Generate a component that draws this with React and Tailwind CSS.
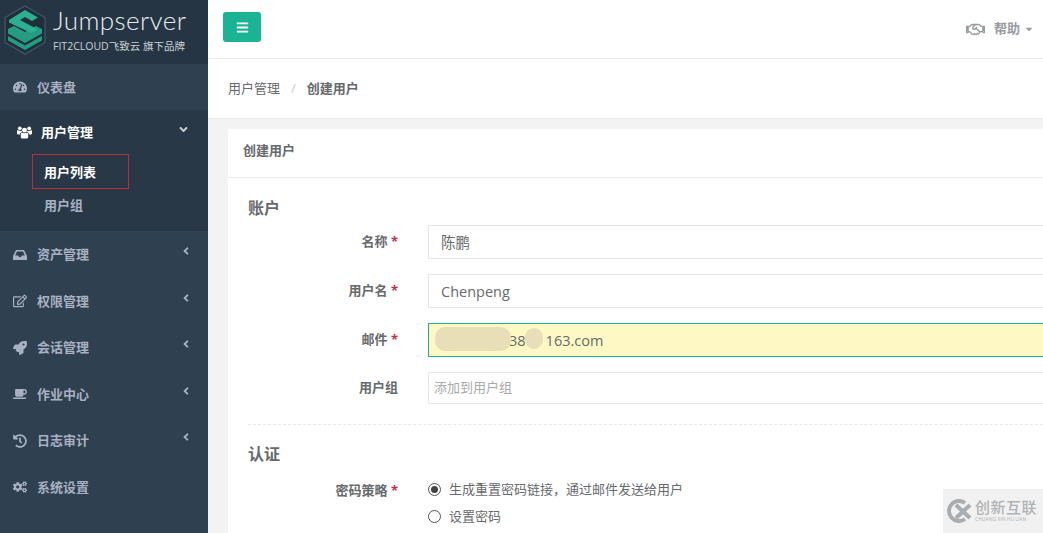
import { FaBars, FaAngleDown, FaAngleLeft, FaTachometerAlt, FaRegEdit, FaRocket, FaCoffee, FaHistory, FaCogs, FaRegHandshake, FaCaretDown } from 'react-icons/fa';

const cjk = 'font-["Open_Sans","Noto_Sans_CJK_SC",sans-serif]';

const Logo = () => (
  <svg width="42" height="50" viewBox="0 0 42 50" className="shrink-0">
    <path d="M21 1 L41 12.5 V37.5 L21 49 L1 37.5 V12.5 Z" fill="#1f2e3a" stroke="#43586a" strokeWidth="1.2" />
    <path d="M4 31 L21 40.5 L38 31 V35.5 L21 45 L4 35.5 Z" fill="#239c82" />
    <path d="M4 24 L10 21 L21 27 L32 21 L38 24 V28.5 L21 38 L4 28.5 Z" fill="#239c82" />
    <path d="M5 15 L21 5 L34 12.5 L28 16 L21 12 L16 15 L34 24.5 L27 28 L5 17.5 Z" fill="#2bb094" />
  </svg>
);

// closer to the older font-awesome shapes than the packaged ones
const InboxIcon = ({ className }) => (
  <svg viewBox="0 0 14 14" className={className}>
    <path fillRule="evenodd" fill="currentColor" d="M3 2 H11 L14 8 V12 H0 V8 Z M4 3.5 L2.2 7.5 H5 L6 9 H8 L9 7.5 H11.8 L10 3.5 Z" />
  </svg>
);

const UsersIcon = ({ className }) => (
  <svg viewBox="0 0 16 15" className={className}>
    <g fill="currentColor">
      <circle cx="8" cy="5" r="2.6" />
      <circle cx="3" cy="3" r="2" />
      <circle cx="13" cy="3" r="2" />
      <path d="M4 9.5 C4 8 5 7.5 6 7.8 C7.2 8.4 8.8 8.4 10 7.8 C11 7.5 12 8 12 9.5 V12 C12 13.5 11 14 10 14 H6 C5 14 4 13.5 4 12 Z" />
      <path d="M0 5.5 C0 5 1 5 1.5 5.4 C2.5 6 4 6 4.6 5.6 C5 6.3 5.3 6.6 5.6 7 C4 7.2 3.2 8 3 9.5 H1 C0.4 9.5 0 9 0 8.5 Z" />
      <path d="M16 5.5 C16 5 15 5 14.5 5.4 C13.5 6 12 6 11.4 5.6 C11 6.3 10.7 6.6 10.4 7 C12 7.2 12.8 8 13 9.5 H15 C15.6 9.5 16 9 16 8.5 Z" />
    </g>
  </svg>
);

const NavItem = ({ icon: Icon, label, arrow = true }) => (
  <div className="h-[46.5px] flex items-center pl-[13px] pr-[16px] pt-[1px] text-[#a7b1c2] text-[13px] font-semibold">
    <Icon className="w-[14px] h-[14px] mr-[10px] shrink-0" />
    <span>{label}</span>
    {arrow && <FaAngleLeft className="ml-auto w-[12px] h-[12px] -mt-[7px]" />}
  </div>
);

const Sidebar = () => (
  <aside className="w-[208px] shrink-0 bg-[#2f4050] flex flex-col">
    <div className="h-[63.5px] bg-[#263543] flex items-start pl-[4px] pt-[5px]">
      <Logo />
      <div className="ml-[7px] flex flex-col">
        <span className='font-["Lato",sans-serif] font-light text-[26px] leading-[30px] tracking-[0.4px] text-[#e6edf0]'>Jumpserver</span>
        <span className="text-[10.5px] leading-[14px] mt-[4px] text-[#c9d2d8]">FIT2CLOUD飞致云 旗下品牌</span>
      </div>
    </div>
    <NavItem icon={FaTachometerAlt} label="仪表盘" arrow={false} />
    <div className="h-[121px] bg-[#293846] flex flex-col">
      <div className="h-[45px] shrink-0 flex items-center pl-[17px] pr-[18px] text-white text-[13px] font-semibold">
        <UsersIcon className="w-[15px] h-[15px] mr-[9px]" />
        <span>用户管理</span>
        <FaAngleDown className="ml-auto w-[13px] h-[13px] -mt-[6px] text-[#c5ccd6]" />
      </div>
      <div className="-mt-[1px] ml-[32px] w-[97px] h-[35px] pt-[2px] border border-[#b5303f] flex items-center pl-[11px] text-white text-[13px] font-bold">用户列表</div>
      <div className="pl-[44px] mt-[7px] text-[13px] font-semibold text-[#a7b1c2]">用户组</div>
    </div>
    <NavItem icon={InboxIcon} label="资产管理" />
    <NavItem icon={FaRegEdit} label="权限管理" />
    <NavItem icon={FaRocket} label="会话管理" />
    <NavItem icon={FaCoffee} label="作业中心" />
    <NavItem icon={FaHistory} label="日志审计" />
    <NavItem icon={FaCogs} label="系统设置" arrow={false} />
  </aside>
);

const Label = ({ text, required }) => (
  <div className="w-[150px] shrink-0 text-right text-[13px] font-bold text-[#676a6c]">
    {text}
    {required && <span className="text-[#c0304a]"> *</span>}
  </div>
);

const Field = ({ label, value, required = true }) => (
  <div className="flex items-center h-[34px] mb-[15px]">
    <Label text={label} required={required} />
    <div className="ml-[30px] flex-1 h-full border border-[#e5e6e7] bg-white flex items-center pl-[12px] pt-[1px] text-[14.5px] text-[#676a6c]">{value}</div>
  </div>
);

const Radio = ({ checked, label }) => (
  <div className="flex items-center h-[27px] text-[13px] text-[#676a6c]">
    <span className="w-[13px] h-[13px] rounded-full border border-[#555] flex items-center justify-center mr-[8px]">
      {checked && <span className="w-[7px] h-[7px] rounded-full bg-[#444]" />}
    </span>
    {label}
  </div>
);

export default function App() {
  return (
    <div className={`relative w-[1043px] h-[533px] overflow-hidden flex bg-[#f3f3f4] ${cjk}`}>
      <Sidebar />
      <main className="flex-1 min-w-0 flex flex-col">
        <div className="h-[59px] shrink-0 bg-white border-b border-[#e7eaec] flex items-center justify-between pl-[15px] pr-[9px]">
          <button className="w-[38px] h-[30px] -mt-[4px] rounded-[3px] bg-[#1ab394] flex items-center justify-center text-white">
            <FaBars className="w-[13px] h-[13px]" />
          </button>
          <div className="flex items-center text-[13px] font-bold text-[#999c9e]">
            <FaRegHandshake className="w-[19px] h-[19px] mr-[9px]" />
            <span>帮助</span>
            <FaCaretDown className="w-[10px] h-[10px] ml-[4px]" />
          </div>
        </div>
        <div className="h-[60px] shrink-0 bg-white border-b border-[#e7eaec] flex items-center pl-[20px] text-[13px] text-[#676a6c]">
          <span>用户管理</span>
          <span className="mx-[11px] text-[#ccc]">/</span>
          <span className="font-bold">创建用户</span>
        </div>
        <div className="flex-1 min-h-0 pt-[10px] pl-[20px]">
          <div className="bg-white w-[900px] h-[500px]">
            <div className="h-[49px] border-b border-[#e7eaec] flex items-center pl-[15px] pb-[5px] text-[13px] font-bold text-[#676a6c]">创建用户</div>
            <div className="pl-[20px] w-[880px]">
              <h3 className="text-[16px] font-semibold leading-[20px] text-[#676a6c] pt-[20px] pb-[7px]">账户</h3>
              <Field label="名称" value="陈鹏" />
              <Field label="用户名" value="Chenpeng" />
              <div className="relative flex items-center h-[34px] mb-[15px]">
                <Label text="邮件" required />
                <div className="relative ml-[30px] flex-1 h-full border border-[#1ab394] bg-[#fdf8c4] flex items-center pl-[12px] pt-[1px] text-[14.5px] text-[#676a6c] overflow-hidden">
                  <span className="pl-[68px]">38</span>
                  <span className="pl-[20px]">163.com</span>
                  <div className="absolute left-[6px] top-[3px] w-[76px] h-[24px] rounded-[10px] bg-[#e8dfb8]" />
                  <div className="absolute left-[96px] top-[4px] w-[18px] h-[21px] rounded-full bg-[#e8dfb8]" />
                </div>
              </div>
              <div className="flex items-center h-[32px]">
                <Label text="用户组" />
                <div className="ml-[30px] flex-1 h-full border border-[#e5e6e7] rounded-[2px] flex items-center pl-[5px] text-[13px] text-[#aaa]">添加到用户组</div>
              </div>
              <div className="mt-[20px] border-t border-dashed border-[#e7eaec]" />
              <h3 className="text-[16px] font-semibold leading-[20px] text-[#676a6c] pt-[19px] pb-[12px]">认证</h3>
              <div className="flex">
                <div className="pt-[5px]"><Label text="密码策略" required /></div>
                <div className="ml-[30px]">
                  <Radio checked label="生成重置密码链接，通过邮件发送给用户" />
                  <Radio label="设置密码" />
                </div>
              </div>
            </div>
          </div>
        </div>
      </main>
      {/* watermark over the corner */}
      <div className="absolute right-0 bottom-0 w-[100px] h-[44px] bg-[#f1f1f1] flex items-center pl-[3px]">
        <svg width="28" height="26" viewBox="0 0 28 26" className="shrink-0">
          <path d="M19 5 A10 10 0 1 0 19 21" fill="none" stroke="#a9adb0" strokeWidth="4" />
          <path d="M10 7 L24 20 M24 7 L10 20" stroke="#a9adb0" strokeWidth="4" />
        </svg>
        <div className="ml-[1px] flex flex-col text-[#b0b3b5]">
          <span className="text-[15px] leading-[17px] font-medium tracking-[0.5px] whitespace-nowrap">创新互联</span>
          <span className="text-[5px] leading-[7px] whitespace-nowrap">CHUANG XIN HU LIAN</span>
        </div>
      </div>
    </div>
  );
}
